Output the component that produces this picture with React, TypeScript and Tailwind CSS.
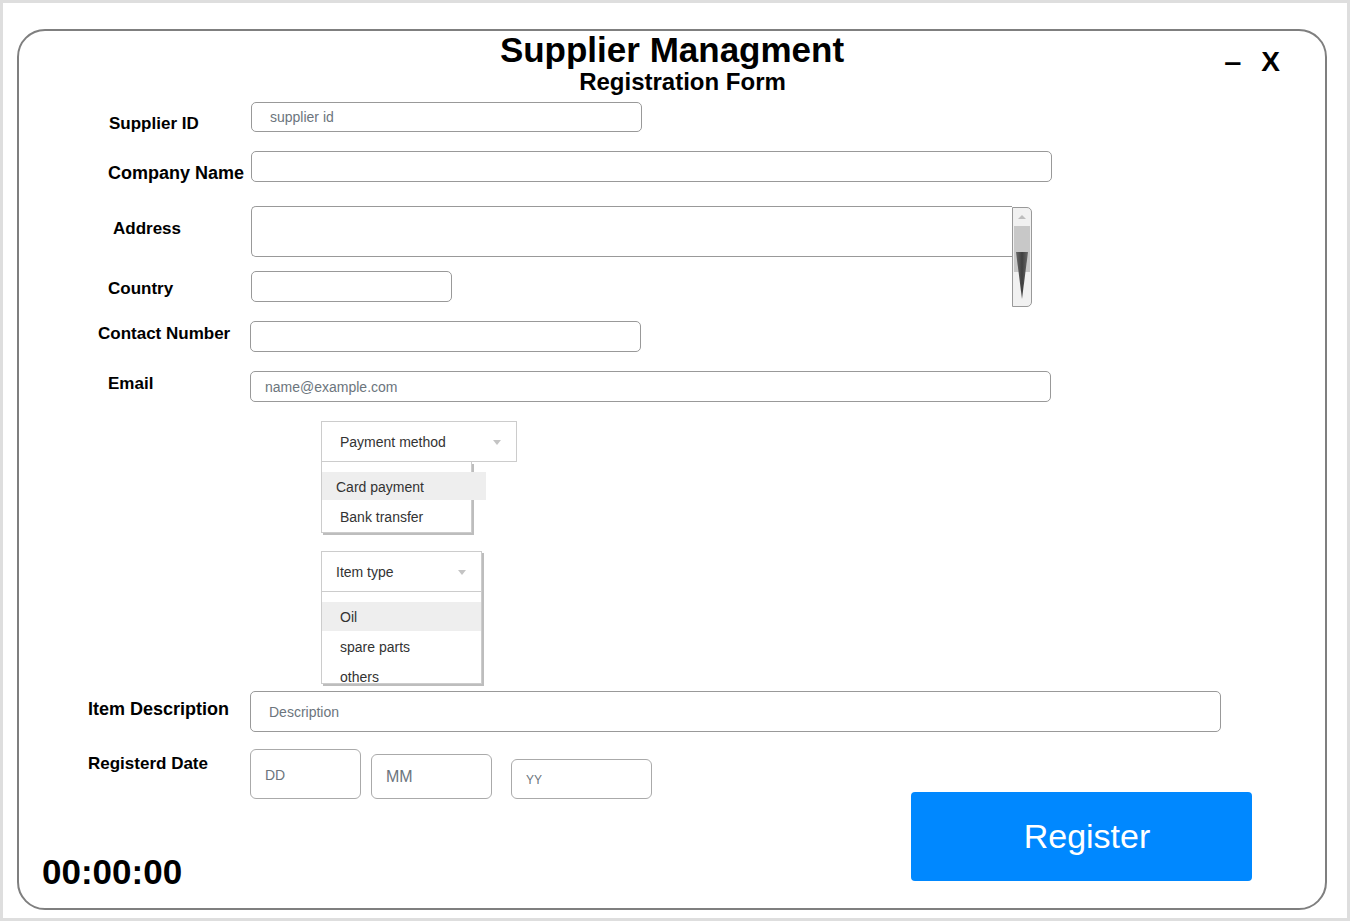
export default function App() {
  return (
    <div className="h-[921px] w-[1350px] border-[3px] border-[#dedede] bg-white pl-[14px] pt-[26px] font-['Liberation_Sans',Arial,sans-serif] text-black">
      <div className="flex h-[881px] w-[1310px] flex-col rounded-[28px] border-2 border-[#7f7f7f]">
        {/* header */}
        <header className="grid grid-cols-[1fr_auto_1fr] pt-[1px]">
          <div />
          <div className="flex flex-col items-center">
            <h1 className="text-[35px] font-bold leading-[35px]">Supplier Managment</h1>
            <h2 className="ml-[21px] mt-[3px] text-[24px] font-bold leading-[23px]">Registration Form</h2>
          </div>
          <div className="flex items-start justify-end gap-[21px] pr-[45px] pt-[16px] text-[28px] font-bold leading-[28px]">
            <span className="inline-block scale-x-110">–</span>
            <span>X</span>
          </div>
        </header>

        {/* supplier id */}
        <div className="mt-[9px] flex h-[30px]">
          <label className="w-[232px] shrink-0 pl-[90px] pt-[12px] text-[17px] font-bold leading-[20px]">Supplier ID</label>
          <input
            placeholder="supplier id"
            className="h-[30px] w-[391px] rounded-[5px] border border-[#999] pl-[18px] text-[14px] outline-none placeholder:text-[#6c757d]"
          />
        </div>

        {/* company name */}
        <div className="mt-[19px] flex h-[31px]">
          <label className="w-[232px] shrink-0 pl-[89px] pt-[12px] text-[18px] font-bold leading-[20px]">Company Name</label>
          <input className="h-[31px] w-[801px] rounded-[5px] border border-[#999] pl-[18px] text-[14px] outline-none" />
        </div>

        {/* address */}
        <div className="mt-[24px] flex h-[51px] items-start">
          <label className="w-[232px] shrink-0 pl-[94px] pt-[13px] text-[17px] font-bold leading-[20px]">Address</label>
          <div className="h-[51px] w-[761px] rounded-l-[5px] border-y border-l border-[#999]" />
          <div className="mt-[1px] flex h-[100px] w-[20px] shrink-0 flex-col items-center rounded-r-[5px] border border-[#999] bg-[#f1f1f1]">
            <span className="mt-[7px] h-0 w-0 border-x-[4px] border-b-[4px] border-x-transparent border-b-[#bdbdbd]" />
            <div className="relative mt-[7px] h-[46px] w-[16px] bg-[#c8c8c8]">
              <svg width="12" height="48" viewBox="0 0 12 48" className="absolute left-[2px] top-[26px]">
                <defs>
                  <linearGradient id="sb" x1="0" x2="1" y1="0" y2="0">
                    <stop offset="0" stopColor="#6a6a6a" />
                    <stop offset="0.5" stopColor="#3f3f3f" />
                    <stop offset="1" stopColor="#6a6a6a" />
                  </linearGradient>
                </defs>
                <polygon points="0,0 12,0 6,47" fill="url(#sb)" />
              </svg>
            </div>
          </div>
        </div>

        {/* country */}
        <div className="mt-[14px] flex h-[31px]">
          <label className="w-[232px] shrink-0 pl-[89px] pt-[8px] text-[17px] font-bold leading-[20px]">Country</label>
          <input className="h-[31px] w-[201px] rounded-[5px] border border-[#999] pl-[14px] text-[14px] outline-none" />
        </div>

        {/* contact number */}
        <div className="mt-[19px] flex h-[31px]">
          <label className="w-[231px] shrink-0 pl-[79px] pt-[3px] text-[17px] font-bold leading-[20px]">Contact Number</label>
          <input className="h-[31px] w-[391px] rounded-[5px] border border-[#999] pl-[14px] text-[14px] outline-none" />
        </div>

        {/* email */}
        <div className="mt-[19px] flex h-[31px]">
          <label className="w-[231px] shrink-0 pl-[89px] pt-[3px] text-[17px] font-bold leading-[20px]">Email</label>
          <input
            placeholder="name@example.com"
            className="h-[31px] w-[801px] rounded-[5px] border border-[#999] pl-[14px] text-[14px] outline-none placeholder:text-[#6c757d]"
          />
        </div>

        {/* payment method */}
        <div className="ml-[302px] mt-[19px] w-[196px] text-[14px] text-[#333]">
          <div className="flex h-[41px] items-center justify-between border border-[#ccc] pl-[18px] pr-[15px] pt-[1px]">
            <span>Payment method</span>
            <span className="h-0 w-0 border-x-[4px] border-t-[5px] border-x-transparent border-t-[#c4c4c4]" />
          </div>
          <div className="h-[71px] w-[151px] border-x border-b border-[#ccc] pt-[10px] shadow-[2px_2px_0_#bdbdbd]">
            <div className="relative flex h-[28px] w-[164px] items-center bg-[#eee] pl-[14px] pt-[2px]">Card payment</div>
            <div className="flex h-[31px] items-center pl-[18px] pt-[3px]">Bank transfer</div>
          </div>
        </div>

        {/* item type */}
        <div className="ml-[302px] mt-[18px] w-[161px] text-[14px] text-[#333] shadow-[2px_2px_0_#bdbdbd]">
          <div className="flex h-[41px] items-center justify-between border border-[#ccc] pl-[14px] pr-[15px] pt-[1px]">
            <span>Item type</span>
            <span className="h-0 w-0 border-x-[4px] border-t-[5px] border-x-transparent border-t-[#c4c4c4]" />
          </div>
          <div className="h-[92px] border-x border-b border-[#ccc] pt-[10px]">
            <div className="flex h-[29px] items-center bg-[#eee] pl-[18px] pt-[2px]">Oil</div>
            <div className="flex h-[30px] items-center pl-[18px] pt-[2px]">spare parts</div>
            <div className="flex h-[30px] items-center pl-[18px] pt-[2px]">others</div>
          </div>
        </div>

        {/* item description */}
        <div className="mt-[7px] flex h-[41px]">
          <label className="w-[231px] shrink-0 pl-[69px] pt-[8px] text-[18px] font-bold leading-[20px]">Item Description</label>
          <input
            placeholder="Description"
            className="h-[41px] w-[971px] rounded-[5px] border border-[#999] pl-[18px] text-[14px] outline-none placeholder:text-[#6c757d]"
          />
        </div>

        {/* date + footer */}
        <div className="mt-[17px] flex items-start">
          <div className="flex flex-col">
            <div className="flex h-[50px] items-end">
              <label className="w-[231px] shrink-0 self-start pl-[69px] pt-[5px] text-[17px] font-bold leading-[20px]">Registerd Date</label>
              <input
                placeholder="DD"
                className="h-[50px] w-[111px] rounded-[6px] border border-[#aaa] pl-[14px] pt-[2px] text-[14px] outline-none placeholder:text-[#6c757d]"
              />
              <input
                placeholder="MM"
                className="ml-[10px] h-[45px] w-[121px] rounded-[6px] border border-[#aaa] pl-[14px] text-[16px] outline-none placeholder:text-[#6c757d]"
              />
              <input
                placeholder="YY"
                className="ml-[19px] h-[40px] w-[141px] rounded-[6px] border border-[#aaa] pl-[14px] pt-[2px] text-[12px] outline-none placeholder:text-[#6c757d]"
              />
            </div>
            <div className="mt-[55px] pl-[23px] text-[35px] font-bold leading-[35px]">00:00:00</div>
          </div>
          <button className="ml-auto mr-[73px] mt-[43px] h-[89px] w-[341px] rounded-[4px] bg-[#0088ff] pl-[11px] text-[34px] text-white">
            Register
          </button>
        </div>
      </div>
    </div>
  );
}
